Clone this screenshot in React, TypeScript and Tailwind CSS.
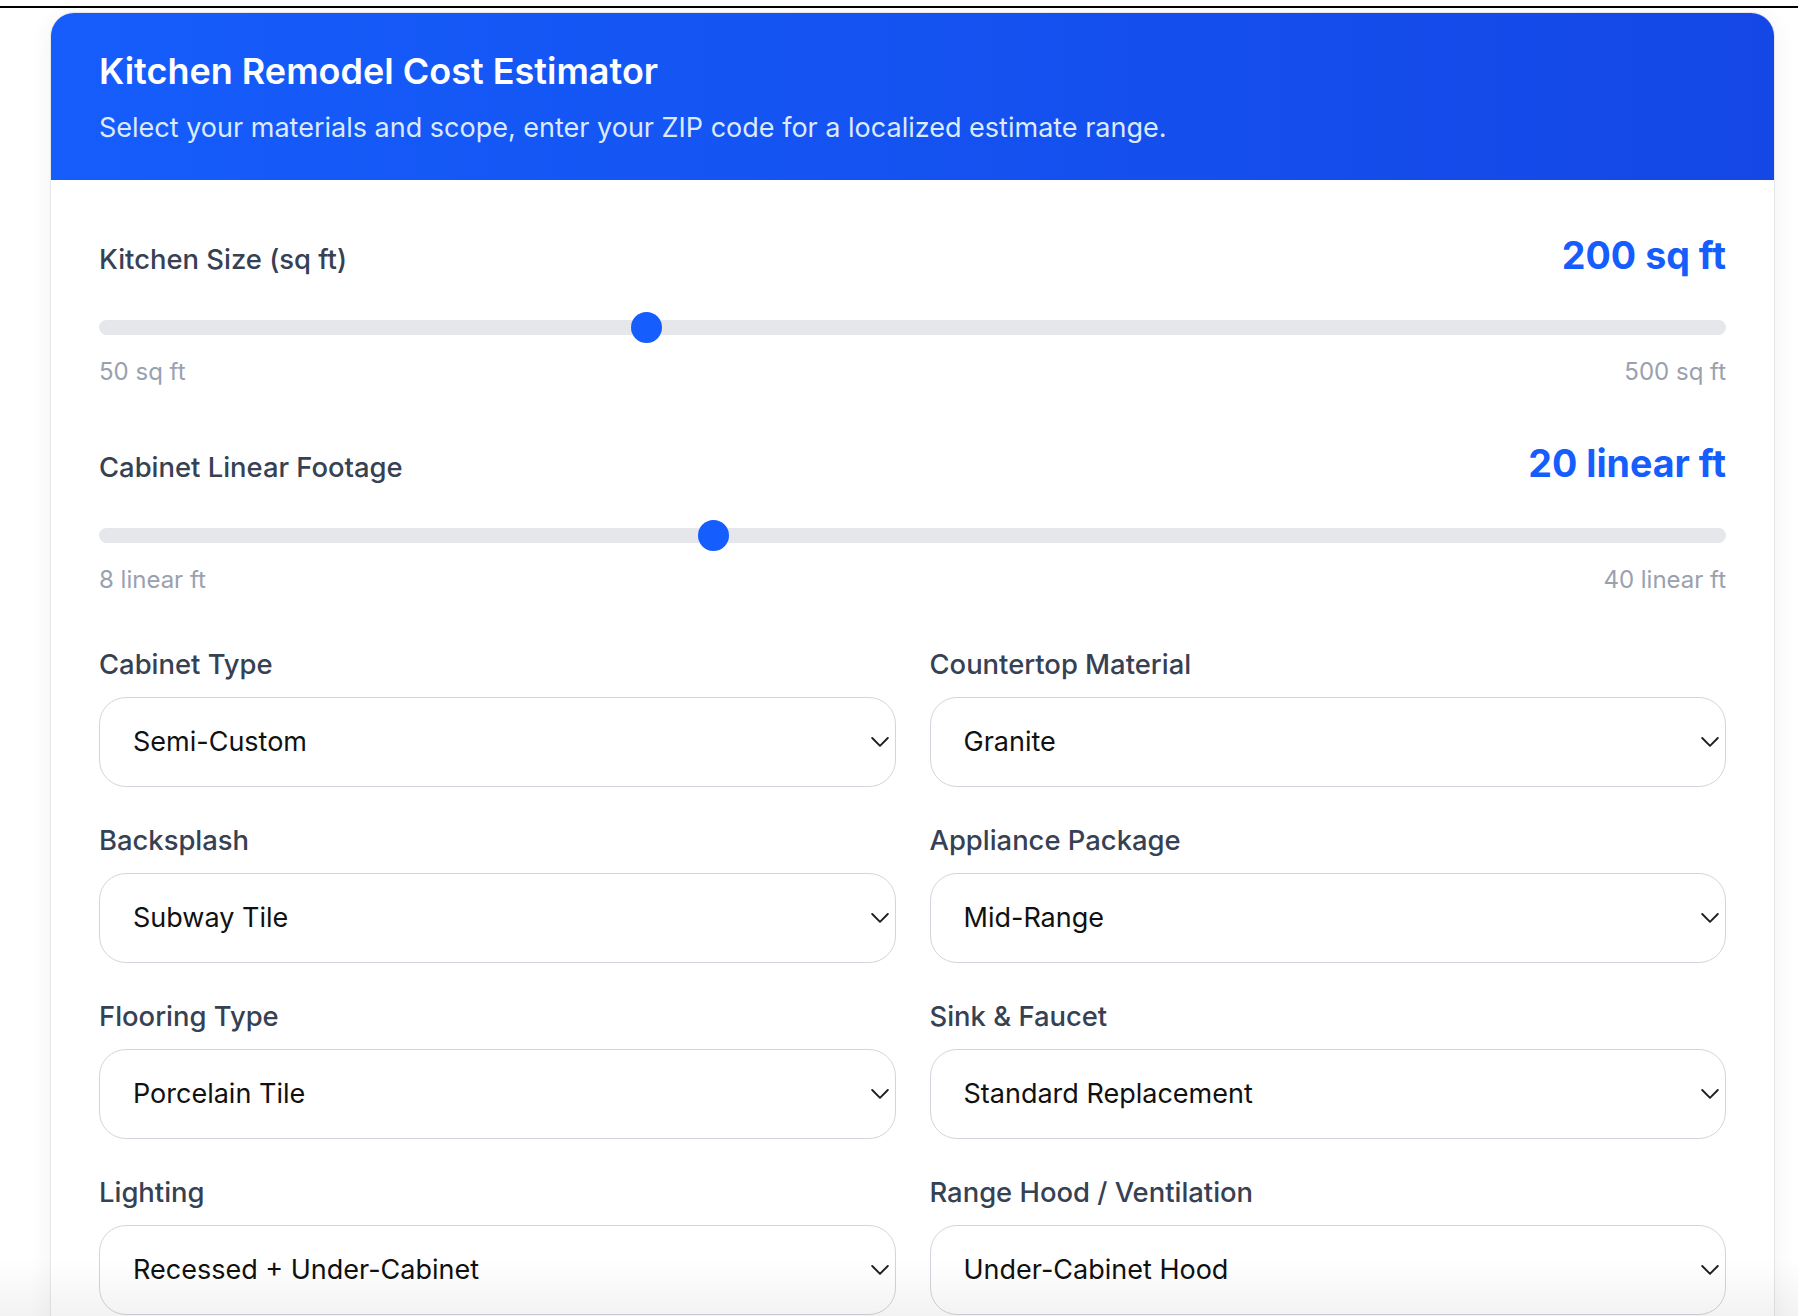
import { useState } from "react";

// Types
interface SelectField {
  label: string;
  value: string;
  options: string[];
}

const FIELDS: SelectField[] = [
  { label: "Cabinet Type", value: "Semi-Custom", options: ["Stock", "Semi-Custom", "Custom"] },
  { label: "Countertop Material", value: "Granite", options: ["Laminate", "Granite", "Quartz", "Marble"] },
  { label: "Backsplash", value: "Subway Tile", options: ["None", "Subway Tile", "Glass Mosaic", "Natural Stone"] },
  { label: "Appliance Package", value: "Mid-Range", options: ["Basic", "Mid-Range", "Premium"] },
  { label: "Flooring Type", value: "Porcelain Tile", options: ["Vinyl", "Porcelain Tile", "Hardwood"] },
  { label: "Sink & Faucet", value: "Standard Replacement", options: ["Keep Existing", "Standard Replacement", "Farmhouse Upgrade"] },
  { label: "Lighting", value: "Recessed + Under-Cabinet", options: ["Basic Fixtures", "Recessed", "Recessed + Under-Cabinet"] },
  { label: "Range Hood / Ventilation", value: "Under-Cabinet Hood", options: ["None", "Under-Cabinet Hood", "Wall Chimney Hood"] },
];

interface RangeSliderProps {
  label: string;
  unit: string;
  min: number;
  max: number;
  value: number;
  onChange: (v: number) => void;
}

/**
 * Labelled range slider with the current value on the right and min / max below.
 */
function RangeSlider({ label, unit, min, max, value, onChange }: RangeSliderProps) {
  return (
    <div>
      <div className="flex items-baseline justify-between">
        <span className="text-[27.4px] leading-[42px] font-medium text-gray-700">{label}</span>
        <span className="text-[37.6px] leading-[48px] font-bold text-blue-600">
          {value} {unit}
        </span>
      </div>
      <div className="mt-[32px] flex h-[31px] items-center">
        <input
          type="range"
          min={min}
          max={max}
          value={value}
          onChange={(e) => onChange(Number(e.target.value))}
          className="h-[15px] w-full cursor-pointer appearance-none rounded-full bg-gray-200 outline-none [&::-webkit-slider-thumb]:h-[31px] [&::-webkit-slider-thumb]:w-[31px] [&::-webkit-slider-thumb]:appearance-none [&::-webkit-slider-thumb]:rounded-full [&::-webkit-slider-thumb]:border-0 [&::-webkit-slider-thumb]:bg-blue-600"
        />
      </div>
      <div className="mt-[11px] flex justify-between text-[24px] leading-[36px] text-gray-400">
        <span>
          {min} {unit}
        </span>
        <span>
          {max} {unit}
        </span>
      </div>
    </div>
  );
}

function Chevron() {
  return (
    <svg
      width="18"
      height="11"
      viewBox="0 0 18 11"
      fill="none"
      className="pointer-events-none absolute top-1/2 right-[7px] -translate-y-1/2"
    >
      <path d="M1.2 1.5 L9 9.3 L16.8 1.5" stroke="#1f1f1f" strokeWidth="1.9" strokeLinecap="round" strokeLinejoin="round" />
    </svg>
  );
}

export default function App() {
  const [size, setSize] = useState(200);
  const [cabinetFt, setCabinetFt] = useState(20);
  const [values, setValues] = useState<string[]>(FIELDS.map((f) => f.value));

  return (
    <div className="relative min-h-screen bg-white font-['Inter',sans-serif]">
      <div className="h-[6px]" />
      <div className="h-[2px] bg-black" />

      <div className="pt-[4px] pl-[50px]">
        <div className="w-[1725px] overflow-hidden rounded-[24px] border border-gray-200 bg-white shadow-[0_4px_24px_rgba(0,0,0,0.06)]">
          {/* Header */}
          <div className="bg-gradient-to-r from-blue-600 to-blue-700 px-[48px] pt-[34px] pb-[31px]">
            <h1 className="text-[36px] leading-[48px] font-semibold text-white">
              Kitchen Remodel Cost Estimator
            </h1>
            <p className="mt-[12px] text-[27px] leading-[42px] text-blue-100">
              Select your materials and scope, enter your ZIP code for a localized estimate range.
            </p>
          </div>

          {/* Body */}
          <div className="px-[48px] pt-[52px] pb-[48px]">
            <RangeSlider label="Kitchen Size (sq ft)" unit="sq ft" min={50} max={500} value={size} onChange={setSize} />
            <div className="mt-[50px]">
              <RangeSlider
                label="Cabinet Linear Footage"
                unit="linear ft"
                min={8}
                max={40}
                value={cabinetFt}
                onChange={setCabinetFt}
              />
            </div>

            <div className="mt-[45px] grid grid-cols-2 gap-x-[34px] gap-y-[32px]">
              {FIELDS.map((field, i) => (
                <label key={field.label} className="block">
                  <span className="block text-[27.4px] leading-[42px] font-medium text-gray-700">{field.label}</span>
                  <div className="relative mt-[12px]">
                    <select
                      value={values[i]}
                      onChange={(e) => {
                        const next = [...values];
                        next[i] = e.target.value;
                        setValues(next);
                      }}
                      className="h-[90px] w-full appearance-none rounded-[27px] border-[1.5px] border-gray-300 bg-transparent pl-[33px] text-[27px] text-[#111] outline-none"
                    >
                      {field.options.map((o) => (
                        <option key={o}>{o}</option>
                      ))}
                    </select>
                    <Chevron />
                  </div>
                </label>
              ))}
            </div>

            <div className="mt-[32px]">
              <span className="block text-[27.4px] leading-[42px] font-medium text-gray-700">ZIP Code</span>
              <input
                type="text"
                placeholder="e.g. 90210"
                className="mt-[12px] h-[90px] w-full rounded-[27px] border-[1.5px] border-gray-300 px-[33px] text-[27px] outline-none"
              />
            </div>
          </div>
        </div>
      </div>

      {/* bottom fade */}
      <div className="pointer-events-none fixed inset-x-0 bottom-0 h-[56px] bg-gradient-to-b from-black/0 to-black/[0.05]" />
    </div>
  );
}
